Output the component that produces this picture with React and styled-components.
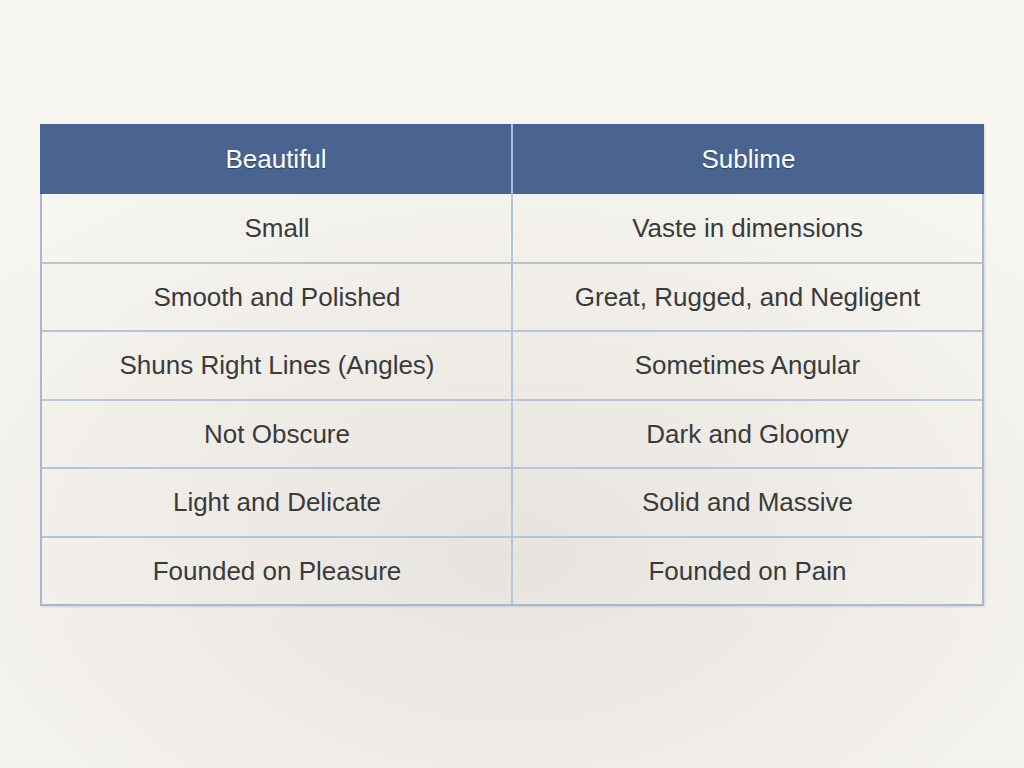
import React from "react";
import styled, { createGlobalStyle } from "styled-components";

const GlobalStyle = createGlobalStyle`
  html, body {
    margin: 0;
    padding: 0;
  }
  body {
    font-family: "Liberation Sans", Arial, sans-serif;
  }
`;

const Page = styled.div`
  width: 1024px;
  height: 768px;
  box-sizing: border-box;
  padding: 124px 40px 0;
  background: radial-gradient(
    ellipse 70% 60% at 50% 72%,
    #e7e4df 0%,
    #efece7 45%,
    #f8f6f1 100%
  );
`;

const Table = styled.div`
  display: grid;
  grid-template-columns: 1fr 1fr;
  width: 944px;
  border-left: 2px solid #a9b8d0;
  border-right: 2px solid #a9b8d0;
  border-bottom: 2px solid #a9b8d0;
  box-sizing: border-box;
  box-shadow: 1px 1px 2px rgba(0, 0, 0, 0.12);
`;

const HeadCell = styled.div`
  height: 70px;
  display: flex;
  align-items: center;
  justify-content: center;
  background: #4a6491;
  color: #ffffff;
  font-size: 26px;
  text-shadow: 0 1px 1px rgba(0, 0, 0, 0.35);
  border-left: ${({ $first }) => ($first ? "none" : "2px solid #a3c0e6")};
  margin-left: ${({ $first }) => ($first ? "-2px" : "-1px")};
  margin-right: ${({ $last }) => ($last ? "-2px" : "0")};
`;

const Cell = styled.div`
  height: ${({ $h }) => $h}px;
  display: flex;
  align-items: center;
  justify-content: center;
  color: #3a3a3a;
  font-size: 26px;
  box-sizing: border-box;
  border-top: ${({ $top }) => ($top ? "2px solid #b6c4da" : "none")};
  border-left: ${({ $first }) => ($first ? "none" : "2px solid #b6c4da")};
  margin-left: ${({ $first }) => ($first ? "0" : "-1px")};
`;

const rows = [
  ["Small", "Vaste in dimensions"],
  ["Smooth and Polished", "Great, Rugged, and Negligent"],
  ["Shuns Right Lines (Angles)", "Sometimes Angular"],
  ["Not Obscure", "Dark and Gloomy"],
  ["Light and Delicate", "Solid and Massive"],
  ["Founded on Pleasure", "Founded on Pain"],
];

const heights = [68, 68, 69, 68, 69, 68];

export default function App() {
  return (
    <>
      <GlobalStyle />
      <Page>
        <Table>
          <HeadCell $first>Beautiful</HeadCell>
          <HeadCell $last>Sublime</HeadCell>
          {rows.map((r, i) => (
            <React.Fragment key={i}>
              <Cell $first $top={i > 0} $h={heights[i]}>
                {r[0]}
              </Cell>
              <Cell $top={i > 0} $h={heights[i]}>
                {r[1]}
              </Cell>
            </React.Fragment>
          ))}
        </Table>
      </Page>
    </>
  );
}
